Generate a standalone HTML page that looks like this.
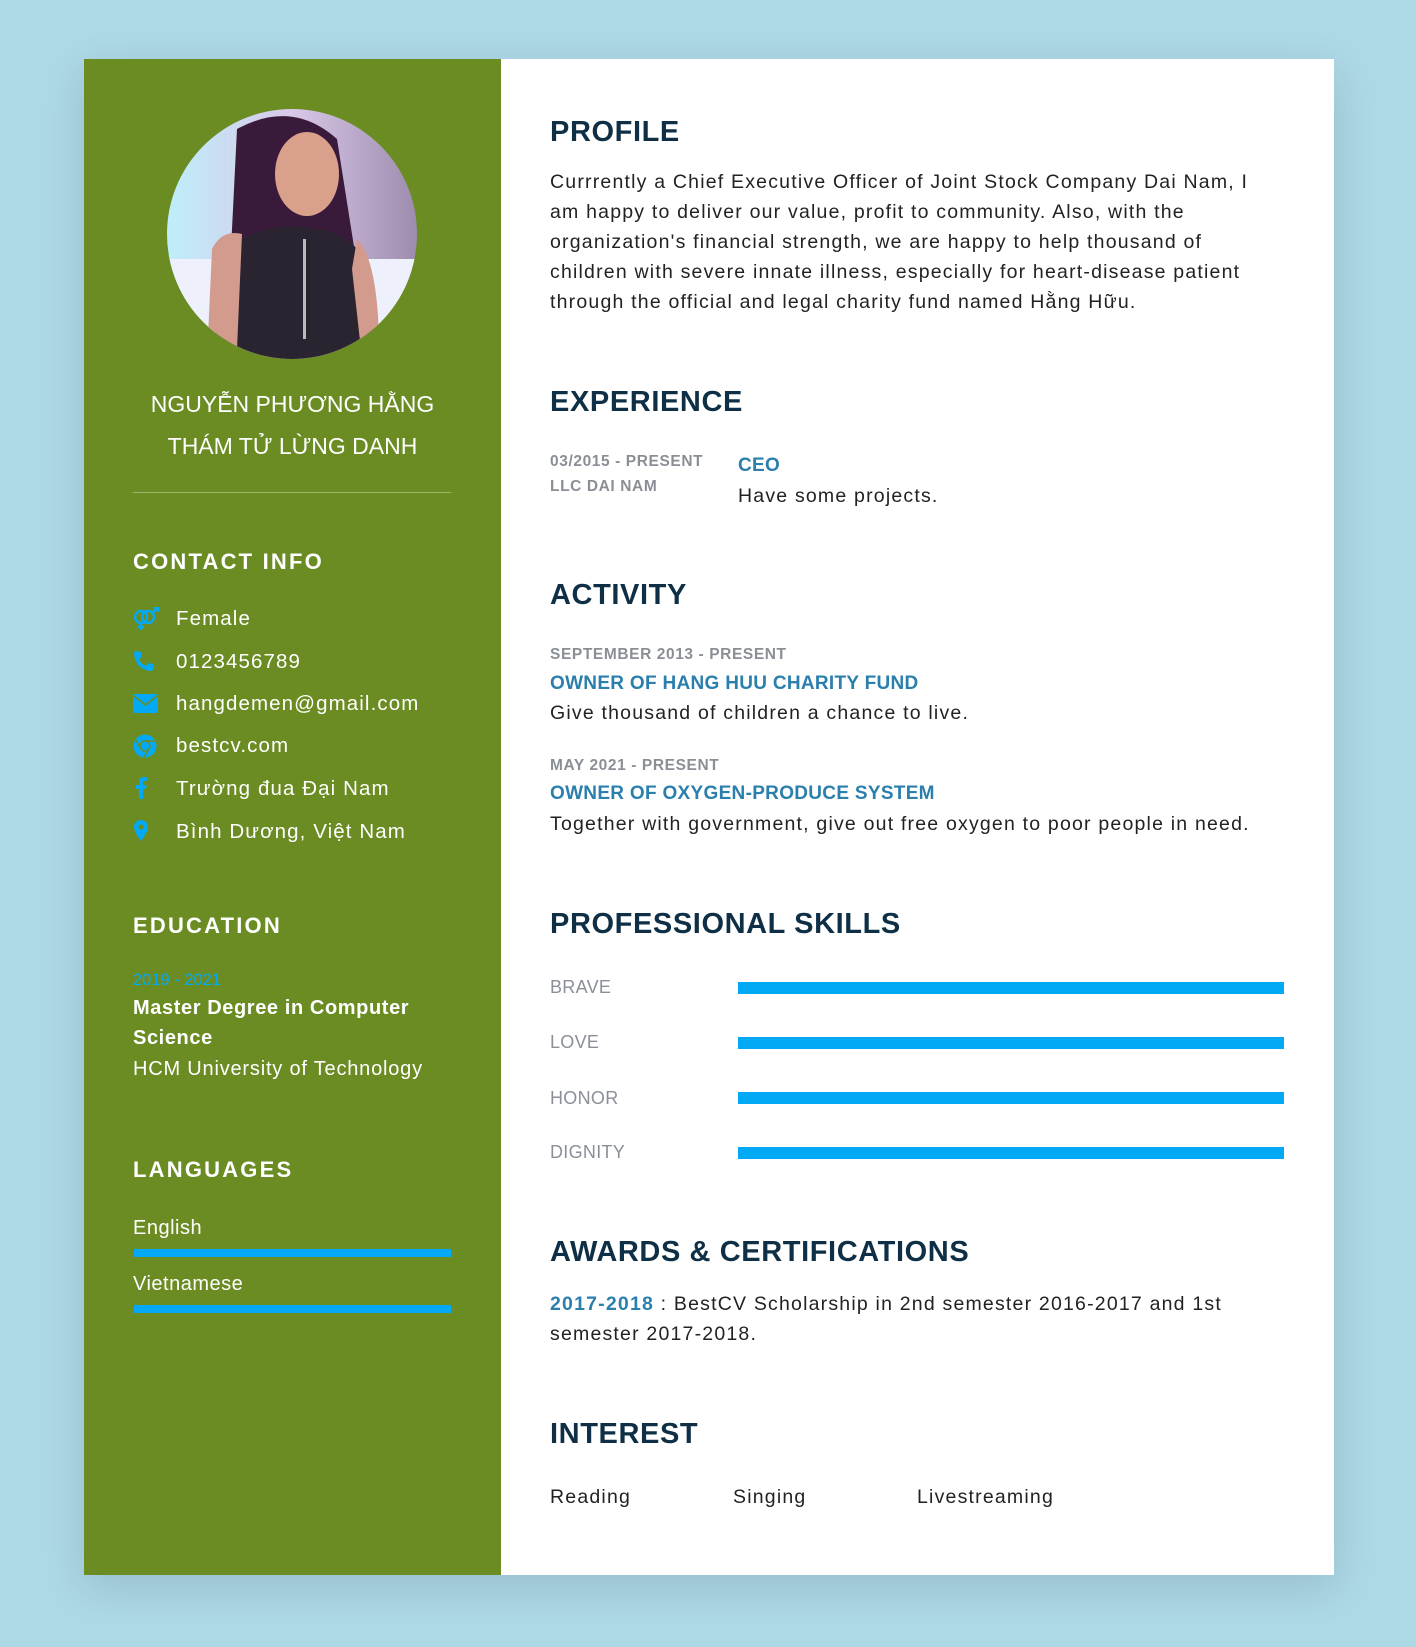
<!DOCTYPE html>
<html><head><meta charset="utf-8"><style>
*{margin:0;padding:0;box-sizing:border-box}
body{width:1416px;height:1647px;background:#add8e6;font-family:"Liberation Sans","Noto Sans CJK SC",sans-serif;position:relative;overflow:hidden}
.card{position:absolute;left:84px;top:59px;width:1250px;height:1516px;background:#fff;box-shadow:0 12px 40px rgba(0,0,0,.12)}
.side{position:absolute;left:84px;top:59px;width:417px;height:1516px;background:#6a8c22}
.a{position:absolute;white-space:nowrap}
.w{color:#fff}
.sh{font-weight:bold;font-size:22px;letter-spacing:2.2px;color:#fff}
.ci{font-size:20.5px;color:#fff;left:176px;letter-spacing:1.1px}
.ic{position:absolute;left:133px}
.mh{font-weight:bold;font-size:29px;letter-spacing:0.6px;color:#0e2f45;left:550px}
.p{font-size:19.5px;color:#222;line-height:30px;letter-spacing:1.2px}
.g{font-size:15.5px;font-weight:bold;color:#8a8f96;letter-spacing:0.6px}
.b{font-weight:bold;color:#2b7fad;font-size:19px;letter-spacing:0.3px}
.bar{position:absolute;background:#03a9f4}
.sk{font-size:18px;color:#8a8f99;left:550px;letter-spacing:0.3px}
</style></head><body>
<div class="card"></div>
<div class="side"></div>
<svg class="a" style="left:167px;top:109px" width="250" height="250" viewBox="0 0 250 250">
<defs><clipPath id="c"><circle cx="125" cy="125" r="125"/></clipPath>
<linearGradient id="bg" x1="0" x2="1"><stop offset="0" stop-color="#bfeefa"/><stop offset=".5" stop-color="#d9c8e8"/><stop offset="1" stop-color="#9d8cae"/></linearGradient></defs>
<g clip-path="url(#c)">
<rect width="250" height="250" fill="url(#bg)"/>
<rect x="0" y="150" width="250" height="100" fill="#eef0fb"/>
<path d="M70 20 Q125 -10 170 30 L200 220 L60 220 Z" fill="#3a1a3a"/>
<ellipse cx="140" cy="65" rx="32" ry="42" fill="#d9a08c"/>
<path d="M60 140 Q100 110 150 120 Q190 125 200 160 L210 250 L45 250 Z" fill="#2a2430"/>
<path d="M45 140 Q55 120 75 125 L70 240 L40 250 Z" fill="#d39a8e"/>
<path d="M190 130 Q210 150 212 230 L195 250 L185 160 Z" fill="#d39a8e"/>
<rect x="136" y="130" width="3" height="100" fill="#bbb"/>
</g></svg>
<div class="a w" style="left:84px;width:417px;text-align:center;top:388px;font-size:23px;line-height:32px">NGUYỄN PHƯƠNG HẰNG</div>
<div class="a w" style="left:84px;width:417px;text-align:center;top:430px;font-size:23px;line-height:32px">THÁM TỬ LỪNG DANH</div>
<div class="a" style="left:133px;top:492px;width:318px;height:1px;background:rgba(255,255,255,.35)"></div>
<div class="a sh" style="left:133px;top:548px;line-height:28px">CONTACT INFO</div>

<svg class="ic" style="top:607px" width="28" height="24" viewBox="0 0 28 24"><g fill="none" stroke="#03a9f4" stroke-width="2.4"><circle cx="8" cy="10" r="6"/><circle cx="15" cy="10" r="6"/><path d="M8 16v7M5 20h6M19 6l6-5M21 1h4v4"/></g></svg>
<div class="a ci" style="top:607px;line-height:24px">Female</div>
<svg class="ic" style="top:650px" width="22" height="22" viewBox="0 0 22 22"><path d="M4 1l4 1 1 5-3 2q2 5 7 7l2-3 5 1 1 4q-1 3-4 3Q3 19 1 4q0-3 3-3z" fill="#03a9f4"/></svg>
<div class="a ci" style="top:650px;line-height:24px">0123456789</div>
<svg class="ic" style="top:694px" width="25" height="19" viewBox="0 0 25 19"><rect width="25" height="19" rx="2" fill="#03a9f4"/><path d="M1 2l11.5 9L24 2" fill="none" stroke="#6a8c22" stroke-width="1.6"/></svg>
<div class="a ci" style="top:692px;line-height:24px">hangdemen@gmail.com</div>
<svg class="ic" style="top:734px" width="24" height="24" viewBox="0 0 24 24"><circle cx="12" cy="12" r="11.5" fill="#03a9f4"/><circle cx="12" cy="12" r="5" fill="none" stroke="#6a8c22" stroke-width="1.4"/><path d="M12 7h10M8 15L3 6M16 15l-5 8" stroke="#6a8c22" stroke-width="1.4"/></svg>
<div class="a ci" style="top:734px;line-height:24px">bestcv.com</div>
<svg class="ic" style="top:776px;left:135px" width="12" height="23" viewBox="0 0 12 23"><path d="M8 23V13h3l.5-4H8V6.5Q8 5 9.5 5H12V1.2Q10.5 1 8.8 1 4 1 4 6v3H1v4h3v10z" fill="#03a9f4"/></svg>
<div class="a ci" style="top:777px;line-height:24px">Trường đua Đại Nam</div>
<svg class="ic" style="top:820px;left:134px" width="14" height="21" viewBox="0 0 14 21"><path d="M7 0a7 7 0 0 1 7 7c0 5-7 14-7 14S0 12 0 7a7 7 0 0 1 7-7z" fill="#03a9f4"/><circle cx="7" cy="7" r="2.5" fill="#6a8c22"/></svg>
<div class="a ci" style="top:820px;line-height:24px">Bình Dương, Việt Nam</div>

<div class="a sh" style="left:133px;top:912px;line-height:28px">EDUCATION</div>
<div class="a" style="left:133px;top:970px;font-size:16.5px;color:#03a9f4;line-height:20px">2019 - 2021</div>
<div class="a w" style="left:133px;top:993px;font-size:20px;font-weight:bold;line-height:30px;letter-spacing:0.6px">Master Degree in Computer<br>Science</div>
<div class="a w" style="left:133px;top:1054px;font-size:20px;line-height:30px;letter-spacing:0.8px">HCM University of Technology</div>

<div class="a sh" style="left:133px;top:1156px;line-height:28px">LANGUAGES</div>
<div class="a w" style="left:133px;top:1216px;font-size:20px;line-height:24px;letter-spacing:0.5px">English</div>
<div class="bar" style="left:134px;top:1249px;width:317px;height:8px"></div>
<div class="a w" style="left:133px;top:1272px;font-size:20px;line-height:24px;letter-spacing:0.5px">Vietnamese</div>
<div class="bar" style="left:134px;top:1305px;width:317px;height:8px"></div>

<div class="a mh" style="top:114px;line-height:36px">PROFILE</div>
<div class="a p" style="left:550px;top:167px">Currrently a Chief Executive Officer of Joint Stock Company Dai Nam, I<br>am happy to deliver our value, profit to community. Also, with the<br>organization's financial strength, we are happy to help thousand of<br>children with severe innate illness, especially for heart-disease patient<br>through the official and legal charity fund named Hằng Hữu.</div>

<div class="a mh" style="top:384px;line-height:36px">EXPERIENCE</div>
<div class="a g" style="left:550px;top:452px;line-height:20px">03/2015 - PRESENT</div>
<div class="a g" style="left:550px;top:477px;line-height:20px">LLC DAI NAM</div>
<div class="a b" style="left:738px;top:454px;line-height:24px">CEO</div>
<div class="a p" style="left:738px;top:481px">Have some projects.</div>

<div class="a mh" style="top:577px;line-height:36px">ACTIVITY</div>
<div class="a g" style="left:550px;top:645px;line-height:20px">SEPTEMBER 2013 - PRESENT</div>
<div class="a b" style="left:550px;top:672px;line-height:24px">OWNER OF HANG HUU CHARITY FUND</div>
<div class="a p" style="left:550px;top:698px">Give thousand of children a chance to live.</div>
<div class="a g" style="left:550px;top:756px;line-height:20px">MAY 2021 - PRESENT</div>
<div class="a b" style="left:550px;top:782px;line-height:24px">OWNER OF OXYGEN-PRODUCE SYSTEM</div>
<div class="a p" style="left:550px;top:809px">Together with government, give out free oxygen to poor people in need.</div>

<div class="a mh" style="top:906px;line-height:36px">PROFESSIONAL SKILLS</div>
<div class="a sk" style="top:976px;line-height:22px">BRAVE</div>
<div class="bar" style="left:738px;top:982px;width:546px;height:12px"></div>
<div class="a sk" style="top:1031px;line-height:22px">LOVE</div>
<div class="bar" style="left:738px;top:1037px;width:546px;height:12px"></div>
<div class="a sk" style="top:1087px;line-height:22px">HONOR</div>
<div class="bar" style="left:738px;top:1092px;width:546px;height:12px"></div>
<div class="a sk" style="top:1141px;line-height:22px">DIGNITY</div>
<div class="bar" style="left:738px;top:1147px;width:546px;height:12px"></div>

<div class="a mh" style="top:1234px;line-height:36px">AWARDS &amp; CERTIFICATIONS</div>
<div class="a p" style="left:550px;top:1289px"><b style="color:#2b7fad">2017-2018</b> : BestCV Scholarship in 2nd semester 2016-2017 and 1st<br>semester 2017-2018.</div>

<div class="a mh" style="top:1416px;line-height:36px">INTEREST</div>
<div class="a p" style="left:550px;top:1482px">Reading</div>
<div class="a p" style="left:733px;top:1482px">Singing</div>
<div class="a p" style="left:917px;top:1482px">Livestreaming</div>
</body></html>
